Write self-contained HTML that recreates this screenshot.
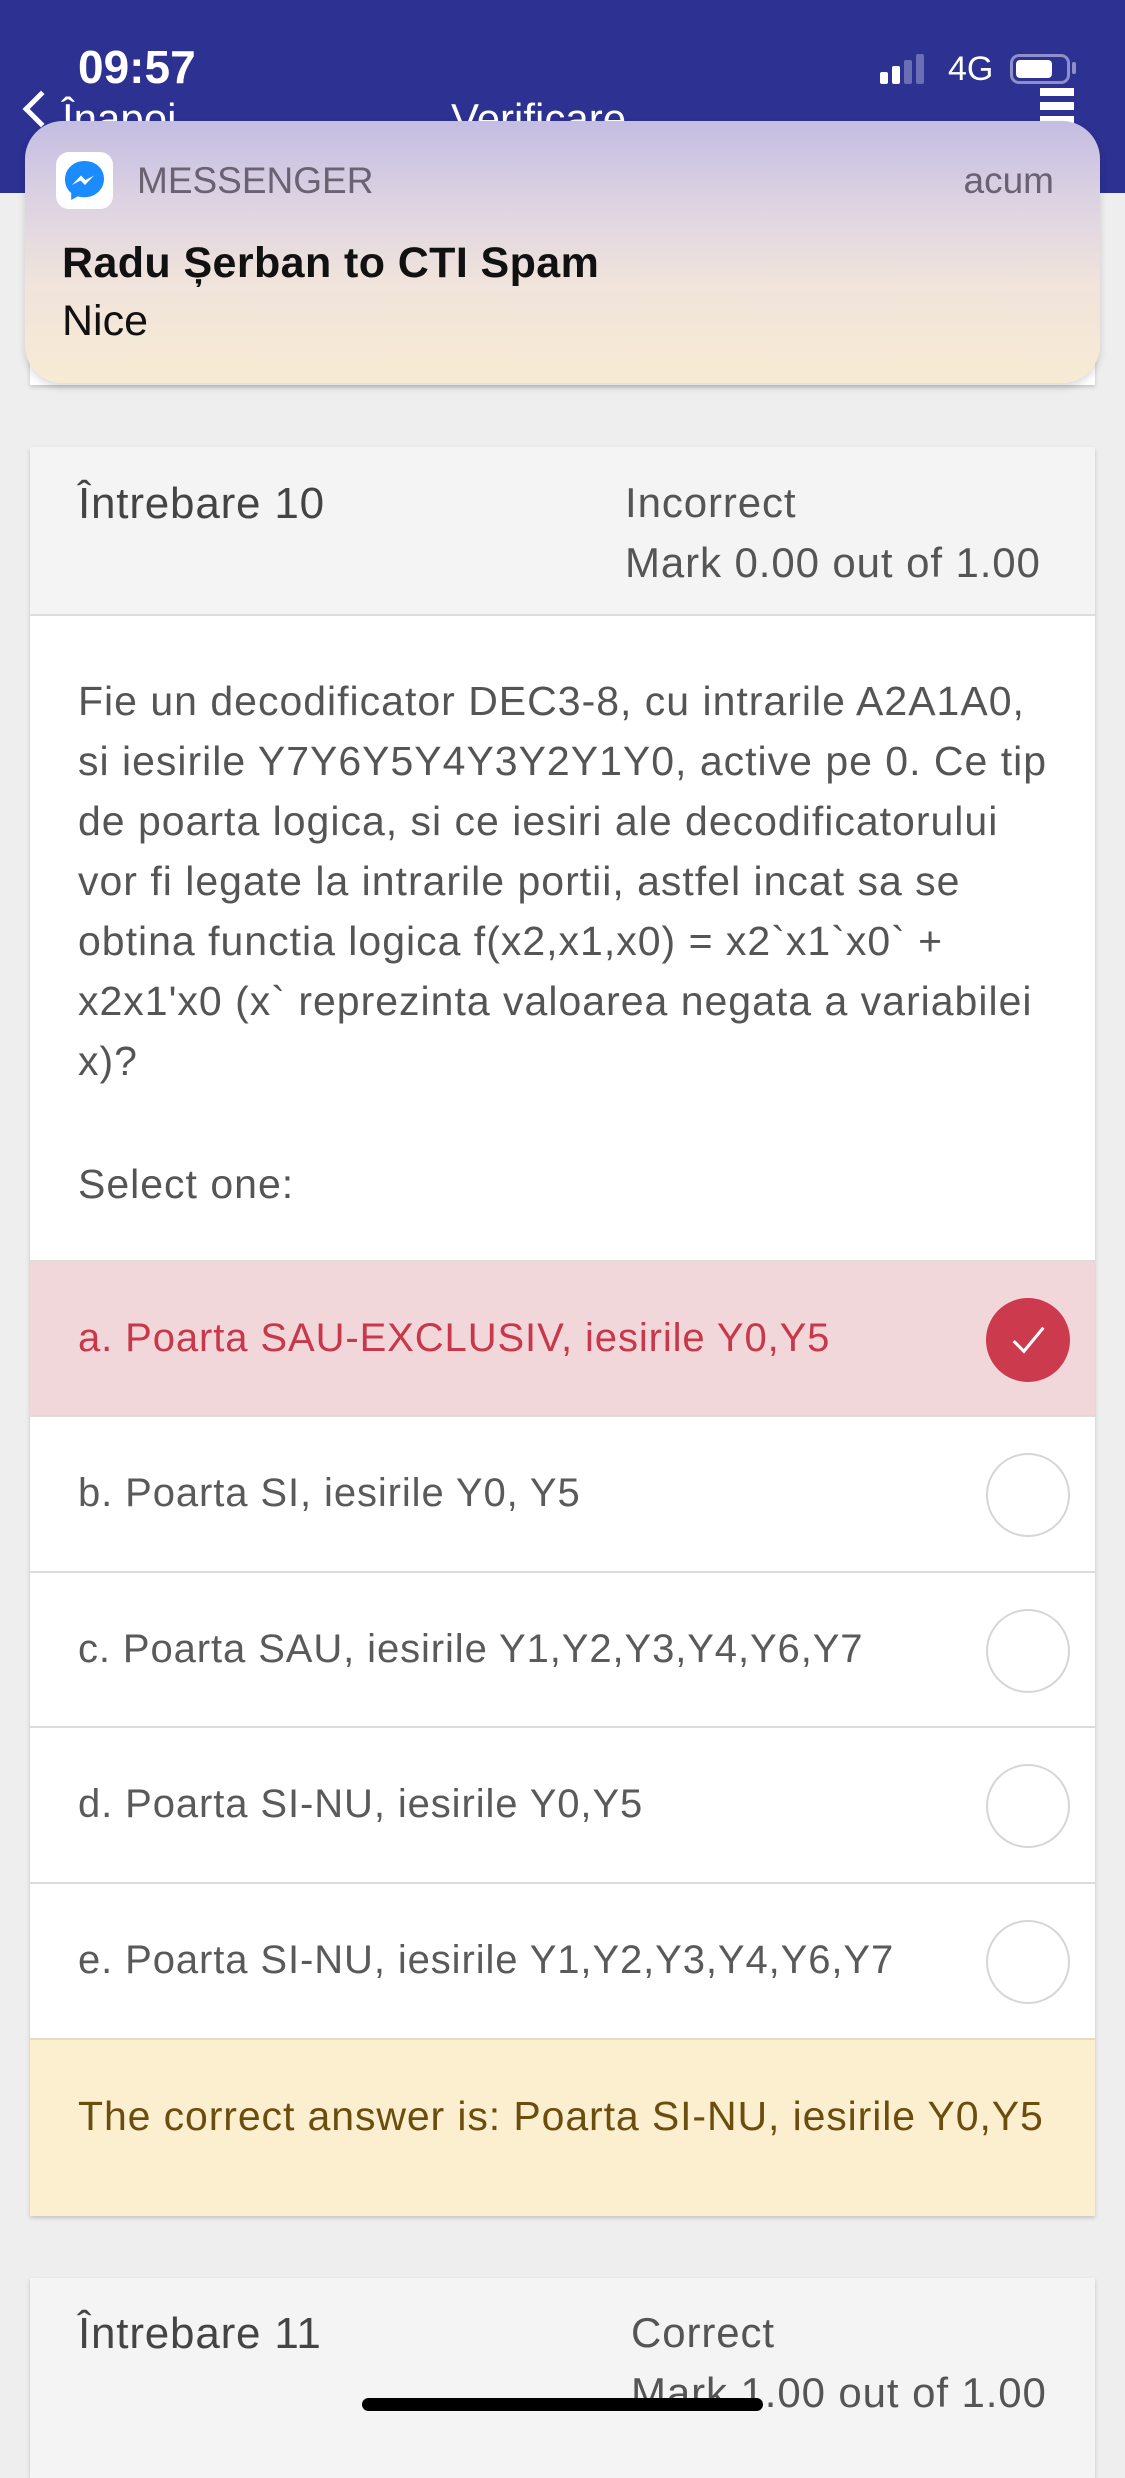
<!DOCTYPE html>
<html><head><meta charset="utf-8">
<style>
*{margin:0;padding:0;box-sizing:border-box}
body{width:1125px;height:2436px;overflow:hidden;background:#eeeeee;font-family:"Liberation Sans",sans-serif;position:relative}
.hdr{position:absolute;left:0;top:0;width:1125px;height:193px;background:#2c3192}
.abs{position:absolute;white-space:nowrap}
.card{position:absolute;left:30px;width:1065px;background:#fff;box-shadow:0 2px 4px rgba(0,0,0,.18)}
.ch{background:#f4f4f4;border-bottom:2px solid #ddd;position:relative}
.t{color:#555;font-size:41px;letter-spacing:1px}
.opt{position:absolute;left:0;width:1065px;height:156px;border-top:2px solid #dcdcdc}
.opt span{position:absolute;left:48px;top:54px;font-size:40px;letter-spacing:0.9px;color:#5a5a5a;white-space:nowrap}
.circ{position:absolute;left:956px;top:36px;width:84px;height:84px;border-radius:50%;border:2px solid #d6d6d6;background:#fff}
.hd{font-size:42px;color:#555;letter-spacing:0.9px}
</style></head><body>
<div class="hdr"></div>
<div class="abs" style="left:78px;top:40px;color:#fff;font-size:46px;font-weight:bold;">09:57</div>
<div class="abs" style="left:880px;top:56px;">
 <div style="position:absolute;left:0;top:16px;width:8px;height:12px;background:#fff;border-radius:2px"></div>
 <div style="position:absolute;left:12px;top:10px;width:8px;height:18px;background:#fff;border-radius:2px"></div>
 <div style="position:absolute;left:24px;top:4px;width:8px;height:24px;background:#6a6fb5;border-radius:2px"></div>
 <div style="position:absolute;left:36px;top:-2px;width:8px;height:30px;background:#6a6fb5;border-radius:2px"></div>
</div>
<div class="abs" style="left:948px;top:50px;color:#fff;font-size:34px;">4G</div>
<div class="abs" style="left:1010px;top:54px;width:60px;height:30px;border:3px solid #8d90c8;border-radius:9px"><div style="position:absolute;left:3px;top:3px;width:36px;height:18px;background:#fff;border-radius:4px"></div></div>
<div class="abs" style="left:1072px;top:62px;width:4px;height:12px;background:#8d90c8;border-radius:2px"></div>
<div class="abs" style="left:28px;top:96px;width:26px;height:26px;border-left:5px solid #fff;border-bottom:5px solid #fff;transform:rotate(45deg)"></div>
<div class="abs" style="left:62px;top:95px;color:#fff;font-size:42px;">Înapoi</div>
<div class="abs" style="left:451px;top:95px;color:#fff;font-size:42px;">Verificare</div>
<div class="abs" style="left:1040px;top:88px;width:34px;height:8px;background:#fff"></div>
<div class="abs" style="left:1040px;top:102px;width:34px;height:8px;background:#fff"></div>
<div class="abs" style="left:1040px;top:116px;width:34px;height:8px;background:#fff"></div>

<div class="card" style="top:300px;height:85px"></div>

<div class="abs" style="left:25px;top:121px;width:1075px;height:262px;border-radius:38px;background:linear-gradient(180deg,#c3bde2 0%,#dcd2e2 30%,#efe3dc 60%,#f8ebd3 100%);box-shadow:0 4px 8px rgba(0,0,0,.15)">
 <div style="position:absolute;left:31px;top:31px;width:57px;height:57px;background:#fff;border-radius:13px">
  <svg width="57" height="57" viewBox="0 0 57 57"><path d="M28.5 9C17.5 9 9 17 9 27.5c0 5.5 2.3 10.3 6.2 13.6V48l6.5-3.6c2.1.6 4.4.9 6.8.9 11 0 19.5-8 19.5-18.5S39.5 9 28.5 9z" fill="#1a8cff"/><path d="M16 33l9-9.5 4.5 4.5 8.5-4.5-9 9.5-4.5-4.5z" fill="#fff"/></svg>
 </div>
 <div class="abs" style="left:112px;top:39px;font-size:37px;color:#6a6270;">MESSENGER</div>
 <div class="abs" style="right:46px;top:39px;font-size:37px;color:#6a6270;">acum</div>
 <div class="abs" style="left:37px;top:118px;font-size:43px;font-weight:bold;color:#111;letter-spacing:0.4px">Radu Șerban to CTI Spam</div>
 <div class="abs" style="left:37px;top:176px;font-size:43px;color:#111;">Nice</div>
</div>

<div class="card" style="top:447px;height:1769px">
 <div class="ch" style="height:169px">
  <div class="abs" style="left:48px;top:32px;font-size:44px;color:#444;letter-spacing:0.8px">Întrebare 10</div>
  <div class="abs hd" style="left:595px;top:32px">Incorrect</div>
  <div class="abs hd" style="left:595px;top:92px">Mark 0.00 out of 1.00</div>
 </div>
 <div class="t" style="position:absolute;left:48px;top:224px;line-height:60px;white-space:nowrap">
  Fie un decodificator DEC3-8, cu intrarile A2A1A0,<br>si iesirile Y7Y6Y5Y4Y3Y2Y1Y0, active pe 0. Ce tip<br>de poarta logica, si ce iesiri ale decodificatorului<br>vor fi legate la intrarile portii, astfel incat sa se<br>obtina functia logica f(x2,x1,x0) = x2`x1`x0` +<br>x2x1'x0 (x` reprezinta valoarea negata a variabilei<br>x)?
 </div>
 <div class="t abs" style="left:48px;top:714px">Select one:</div>
 <div class="opt" style="top:813px;background:#f2d7da"><span style="color:#c8374a">a. Poarta SAU-EXCLUSIV, iesirile Y0,Y5</span>
  <div class="circ" style="background:#cc3a4d;border-color:#cc3a4d"><svg width="80" height="80" viewBox="0 0 78 78" style="position:absolute;left:0;top:0"><path d="M25 40l10 10 19-23" stroke="#fff" stroke-width="3" fill="none"/></svg></div></div>
 <div class="opt" style="top:968px"><span>b. Poarta SI, iesirile Y0, Y5</span><div class="circ"></div></div>
 <div class="opt" style="top:1124px"><span>c. Poarta SAU, iesirile Y1,Y2,Y3,Y4,Y6,Y7</span><div class="circ"></div></div>
 <div class="opt" style="top:1279px"><span>d. Poarta SI-NU, iesirile Y0,Y5</span><div class="circ"></div></div>
 <div class="opt" style="top:1435px"><span>e. Poarta SI-NU, iesirile Y1,Y2,Y3,Y4,Y6,Y7</span><div class="circ"></div></div>
 <div style="position:absolute;left:0;top:1591px;width:1065px;height:178px;background:#fcefd0;border-top:2px solid #e8dcc0">
  <div class="abs" style="left:48px;top:53px;font-size:41px;letter-spacing:0.9px;color:#6b4e0e">The correct answer is: Poarta SI-NU, iesirile Y0,Y5</div>
 </div>
</div>

<div class="card" style="top:2278px;height:200px;background:#f4f4f4">
 <div class="abs" style="left:48px;top:31px;font-size:44px;color:#444;letter-spacing:0.8px">Întrebare 11</div>
 <div class="abs hd" style="left:601px;top:31px">Correct</div>
 <div class="abs hd" style="left:601px;top:91px">Mark 1.00 out of 1.00</div>
</div>
<div class="abs" style="left:362px;top:2398px;width:401px;height:13px;background:#000;border-radius:7px"></div>
</body></html>
